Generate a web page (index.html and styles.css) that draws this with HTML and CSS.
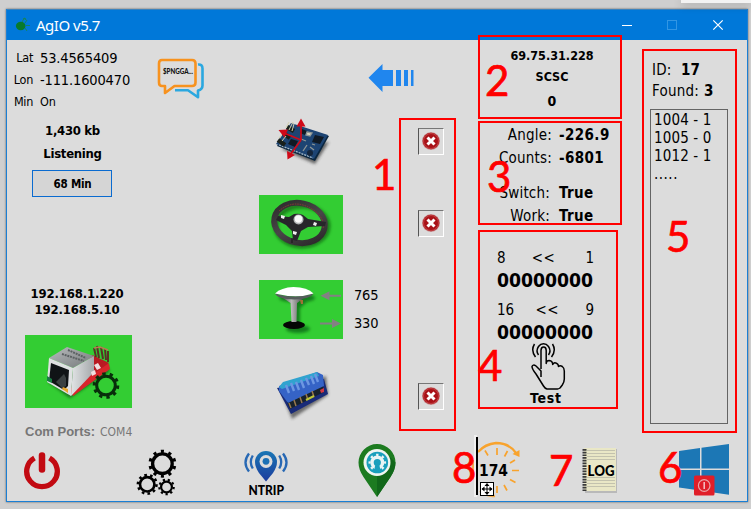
FILE: index.html
```html
<!DOCTYPE html>
<html lang="en">
<head>
<meta charset="utf-8">
<title>AgIO v5.7</title>
<link rel="stylesheet" href="styles.css">
</head>
<body>
<div class="popup-edge"></div>
<div class="window">
  <header class="titlebar">
    <svg class="app-icon" width="16" height="18" viewBox="15 16 16 18"><ellipse cx="20.700" cy="26" rx="4.800" ry="4.200" fill="#087a2b"/><g fill="none" stroke="#16845c" stroke-width="1"><path d="M22 22l2-3.500 2 1M25 23l2-3M26 25.500h4M25 28l2 3M23 19l2-1 1 2"/></g></svg>
    <h1 class="title">AgIO v5.7</h1>
    <svg class="controls" width="110" height="14" viewBox="620 17 110 14" fill="none"><path d="M622 24.500h10" stroke="#fff"/><rect x="667.500" y="19.500" width="9" height="9" stroke="#3296e4"/><path d="M713.300 19.300l9.400 9.400m0-9.400l-9.400 9.400" stroke="#fff" stroke-width="1.200"/></svg>
  </header>

  <main class="main">
    <section class="col-info">
      <div class="gps"><span class="gps-key">Lat</span><span class="gps-num">53.4565409</span></div>
      <div class="gps"><span class="gps-key">Lon</span><span class="gps-num">-111.1600470</span></div>
      <div class="gps"><span class="gps-key">Min</span><span class="gps-small">On</span></div>
      <div class="stat first">1,430 kb</div>
      <div class="stat">Listening</div>
      <button class="btn-min">68 Min</button>
      <div class="ips"><div>192.168.1.220</div><div>192.168.5.10</div></div>
      <div class="ethernet">
        <svg width="107" height="73" viewBox="25 335 107 73">
          <defs><filter id="soft" x="-30%" y="-30%" width="160%" height="160%"><feGaussianBlur stdDeviation="1.6"/></filter>
          <linearGradient id="metal" x1="0" y1="0" x2="1" y2="1"><stop offset="0" stop-color="#b9bcbe"/><stop offset="1" stop-color="#74787a"/></linearGradient>
          <linearGradient id="side" x1="0" y1="0" x2="1" y2="0"><stop offset="0" stop-color="#e2e4e6"/><stop offset="1" stop-color="#a4a8aa"/></linearGradient></defs>
          <path d="M48 382l22 16 40-27-8-10z" fill="#073b0a" opacity=".65" filter="url(#soft)"/>
          <path d="M70 390l3 6 37-27-1-5-17-9z" fill="#d8252b"/>
          <path d="M92 355l17 8-24 17z" fill="#b91922"/>
          <path d="M94 348l2 9m1-11l2 12m2-11l2 12m2-10l1 11m2-9v11" stroke="#593024" stroke-width="2"/>
          <path d="M94 348l6-1 8 3" fill="none" stroke="#b87950" stroke-width="1.500"/>
          <path d="M49 358l18-11 27 9-21 12z" fill="url(#metal)"/>
          <path d="M73 368l21-12v16l-23 24z" fill="url(#side)"/>
          <path d="M49 358l24 10-2 28-24-14z" fill="#dfe1e2"/>
          <path d="M51 363l18 7-1 16-4 4-15-9z" fill="#101416"/>
          <path d="M56 382l8-8 2 4v8l-4 2z" fill="#3b4142"/>
          <path d="M47 376l5 3v4l-5-2z" fill="#197d42"/><path d="M63 387l5 2v4l-6-4z" fill="#e9a72e"/>
          <path d="M68 350l18 8M62 354l22 7" stroke="#5c6163" stroke-width="2" stroke-dasharray="2 .8"/>
          <path d="M94 365l4-2 3 5-4 2zm-3 7l4-2 1 4-4 2z" fill="#f0dfe0"/>
          <circle cx="106" cy="385.500" r="9.300" fill="none" stroke="#082e0b" stroke-width="3"/>
          <circle cx="106" cy="385.500" r="11.700" fill="none" stroke="#082e0b" stroke-width="3.200" pathLength="200" stroke-dasharray="9 11"/>
        </svg>
      </div>
      <div class="com"><b>Com Ports:</b><span>COM4</span></div>
    </section>

    <section class="col-chat">
      <svg width="50" height="44" viewBox="156 57 50 44" fill="none" stroke-width="2.600" stroke-linejoin="round"><path d="M198 64.500q4.500-.5 4.500 4v17q0 4-4.500 5v6.700l-10-7h-13" stroke="#2ba8e0"/><path d="M162 60h30q3.500 0 3.500 3.500v19q0 3.500-3.500 3.500h-17.500l-9.500 7v-7h-3q-3 0-3-3.500v-19q0-3.500 3-3.500z" stroke="#f7921e"/><text x="163" y="74" font-family="Lato, sans-serif" font-size="7" font-weight="900" fill="#111" textLength="30" lengthAdjust="spacingAndGlyphs">$PNGGA...</text></svg>
    </section>

    <section class="col-modules">
      <div class="arrow-row"><svg width="46" height="29" viewBox="368 63 46 29" fill="#2086ee"><path d="M368.500 77.800L382.500 64v6H393v16h-10.500v6z"/><path d="M396 70h5v16h-5zM404 70h4v16h-4zM411 70h2.500v16H411z"/></svg></div>

      <div class="module row-imu">
        <div class="pic plain"><svg width="84" height="60" viewBox="259 109 84 60">
          <path d="M281 147l34 15 14-22z" fill="#333" opacity=".7" filter="url(#soft)"/>
          <path d="M277 144l14-22 38 12-14 25z" fill="#0b263f"/><path d="M276 142l15-21 37 12-14 24z" fill="#1d4473"/>
          <path d="M279 143l34 13" stroke="#a5b9c6" stroke-width="1.300" stroke-dasharray="2 1"/>
          <path d="M278 138l7 5m-2-12l7 5m-3-11l7 4" stroke="#18201c" stroke-width="4.500"/>
          <path d="M286 126l3-6m0 8l4-8m-1 9l2-7M279 136l4-5m-1 8l4-5" stroke="#d3cfae" stroke-width="1"/>
          <path d="M315 133l9 2-4 7-8-2zm-24 4l7 2-3 6-7-3zm11-10l5 2-2 4-5-2z" fill="#101a25"/>
          <path d="M307 130l5 1-2 3-4-1zM303 149l4-6m3 2l4 3M301 137l5 2M312 142l3 1" stroke="#8f9796" stroke-width="1.300" fill="#ddd9c2"/>
          <circle cx="310" cy="151" r="3" fill="#14253b"/>
          <g stroke="#d00918" stroke-width="1.700" fill="none"><path d="M301 138v-17M301 138l-17-7M301 138l-11 15"/></g>
          <path d="M301 116.500l4.500 8h-9zM278.500 128l9.500-.5-3.500 8zM287 149l8 4-7.500 4.500z" fill="#d00918"/>
        </svg></div>
        <div class="values"></div><div class="status"><svg width="18" height="18" viewBox="0 0 18 18"><circle cx="9" cy="9" r="9" fill="#c98f90"/><circle cx="9" cy="9" r="8.300" fill="#a91218"/><circle cx="9" cy="9" r="7.500" fill="none" stroke="#d25a5c" stroke-width=".6"/><path d="M5.500 5.500l7 7m0-7l-7 7" stroke="#fff" stroke-width="3"/></svg></div>
      </div>

      <div class="module row-steer">
        <div class="pic green"><svg width="84" height="59" viewBox="259 195 84 59">
          <defs><linearGradient id="rim" x1="0" y1="0" x2="1" y2="1"><stop offset="0" stop-color="#2b282a"/><stop offset=".5" stop-color="#494648"/><stop offset="1" stop-color="#272426"/></linearGradient></defs>
          <ellipse cx="302" cy="226" rx="26" ry="20" fill="none" stroke="#084b0b" stroke-width="5" opacity=".6" filter="url(#soft)"/>
          <ellipse cx="299.500" cy="223" rx="25.500" ry="19.800" transform="rotate(12 299.500 223)" fill="none" stroke="url(#rim)" stroke-width="6"/>
          <path d="M279 211q16-14 36 0 10 8 8 18" fill="none" stroke="#8b3a32" stroke-width="1" stroke-dasharray="1.500 1"/>
          <path d="M278 216l11 1 5-3q5-1 9 1l5 4 18 3-1 4-17 1-7 4-4 10-4-1-1-9-6-6-10-5z" fill="#27262a"/>
          <circle cx="298.500" cy="219.500" r="5" fill="#b4b7b8"/><circle cx="298.500" cy="219" r="3.700" fill="#fafafa"/>
          <path d="M281 215l4 1-1 3-3-1zM314 222l3 1-1 3-3-1zM293 231l4 1-1 3-3-1z" fill="#f0f0f0"/><path d="M292 238v5" stroke="#171517"/>
        </svg></div>
        <div class="values"></div><div class="status"><svg width="18" height="18" viewBox="0 0 18 18"><circle cx="9" cy="9" r="9" fill="#c98f90"/><circle cx="9" cy="9" r="8.300" fill="#a91218"/><circle cx="9" cy="9" r="7.500" fill="none" stroke="#d25a5c" stroke-width=".6"/><path d="M5.500 5.500l7 7m0-7l-7 7" stroke="#fff" stroke-width="3"/></svg></div>
      </div>

      <div class="module row-gps">
        <div class="pic green"><svg width="84" height="59" viewBox="259 280 84 59">
          <defs><linearGradient id="pole" x1="0" x2="1"><stop offset="0" stop-color="#555"/><stop offset=".4" stop-color="#bbb"/><stop offset="1" stop-color="#444"/></linearGradient></defs>
          <g fill="#064b0b" opacity=".6" filter="url(#soft)"><ellipse cx="297" cy="298" rx="18" ry="4.500"/><path d="M293 302h14l-7 6v17h-5v-17z"/><ellipse cx="298" cy="329" rx="12" ry="4"/></g>
          <ellipse cx="294" cy="325" rx="11" ry="4" fill="#050605"/>
          <path d="M283 298h21l-7 5-.500 19h-5l-1-19z" fill="url(#pole)"/>
          <path d="M275 293.500q18 6 38.500 0-3 5.500-19 6-17-.5-19.500-6z" fill="#555d5b"/>
          <path d="M275 293.500q6-6 18.500-6.500 14 .3 20 6.500-17 5.500-38.500 0z" fill="#fff"/><path d="M300 300h3v4h-2z" fill="#a27037"/>
          <path d="M328 295.700h13M320 323.500h14" stroke="#848084" stroke-width="2"/><path d="M320.500 295.700l9-4.500v9zM341 323.500l-9-4.500v9z" fill="#848084"/>
        </svg></div>
        <div class="values"><span>765</span><span>330</span></div><div class="no-status"></div>
      </div>

      <div class="module row-machine">
        <div class="pic plain"><svg width="84" height="66" viewBox="259 364 84 66">
          <path d="M281 394l44-18 2 19-36 24z" transform="translate(1 1)" fill="#333" opacity=".65" filter="url(#soft)"/>
          <path d="M277 389l14 26 37-20-4-15z" fill="#192b78"/><path d="M287 403l36-16 1 6-34 17z" fill="#18222c"/>
          <path d="M279 387l38-14 6 3 1 11-36 17-9-12z" fill="#3563c6"/><path d="M279 388l4-5 34-10 2 4-37 13z" fill="#31a3cf"/>
          <path d="M286 386l3 8m2-10l3 8m2-9l3 8m2-10l3 8m2-10l3 7m2-9l3 8m1-10l3 8" stroke="#6d97e2" stroke-width="2.400"/>
          <path d="M289 404l2 5m3-8l2 6m4-9l2 6m4-9l2 6m4-9l2 6" stroke="#987850" stroke-width="1.500"/><path d="M306 401l8-4" stroke="#bdc638" stroke-width="2"/><path d="M320 391l4-2v4l-3 1z" fill="#d33845"/>
        </svg></div>
        <div class="values"></div><div class="status"><svg width="18" height="18" viewBox="0 0 18 18"><circle cx="9" cy="9" r="9" fill="#c98f90"/><circle cx="9" cy="9" r="8.300" fill="#a91218"/><circle cx="9" cy="9" r="7.500" fill="none" stroke="#d25a5c" stroke-width=".6"/><path d="M5.500 5.500l7 7m0-7l-7 7" stroke="#fff" stroke-width="3"/></svg></div>
      </div>
    </section>

    <section class="col-data">
      <div class="caster"><div>69.75.31.228</div><div class="mount">SCSC</div><div class="age">0</div></div>
      <dl class="steer"><dt>Angle:</dt><dd>-226.9</dd><dt>Counts:</dt><dd>-6801</dd></dl>
      <dl class="steer switches"><dt>Switch:</dt><dd>True</dd><dt>Work:</dt><dd>True</dd></dl>
      <div class="bits">
        <div class="bit-head"><span>8</span><span class="dir">&lt;&lt;</span><span>1</span></div><div class="bit-val">00000000</div>
        <div class="bit-head second"><span>16</span><span class="dir">&lt;&lt;</span><span>9</span></div><div class="bit-val">00000000</div>
      </div>
      <div class="test"><svg width="36" height="49" viewBox="530 341 36 49" fill="none" stroke="#000" stroke-width="1.500" stroke-linejoin="round"><path d="M541 369v-18.500q0-3.500 2.600-3.500t2.600 3.500v13q0-3 3-3 3.500.5 3.500 4 1-2.500 3.800-1.300 2 .8 2 3.300 1.500-1.500 3.800 0 2 1.500 2 4.500v8q0 3-2 6l-2.300 3q-1.500 1-2.500 1H547q-2-.5-3.500-3l-7.500-12q-4-5-4-7.500 1-2.500 4-.5l5 5v6"/><path d="M538.500 355q-3-4 0-8.500 2-2.800 5-2.800t5 2.800q3 4.500 0 8.500M535.500 357q-5-6.500-1-13M551.500 357q5-6.500 1-13"/></svg><span>Test</span></div>
    </section>

    <section class="col-list">
      <div class="pair"><span class="id-key">ID:</span><b>17</b></div>
      <div class="pair"><span class="found-key">Found:</span><b>3</b></div>
      <div class="listbox"><div>1004 - 1</div><div>1005 - 0</div><div>1012 - 1</div><div class="more">.....</div></div>
    </section>
  </main>

  <footer class="toolbar">
    <svg width="38" height="61" viewBox="23 440 38 61" fill="none"><path d="M34.500 458a15.300 15.300 0 1 0 15 0" stroke="#c20a12" stroke-width="5.300"/><path d="M42 455.500v14" stroke="#c20a12" stroke-width="6.500" stroke-linecap="round"/></svg>
    <svg width="42" height="61" viewBox="136 440 42 61" fill="none" stroke="#000"><circle cx="162.400" cy="463.700" r="9.800" stroke-width="3.300"/><circle cx="162.400" cy="463.700" r="12.400" stroke-width="3.200" pathLength="200" stroke-dasharray="8 12" stroke-dashoffset="-46"/><circle cx="147.200" cy="484.300" r="7.200" stroke-width="2.600"/><circle cx="147.200" cy="484.300" r="9.300" stroke-width="2.600" pathLength="200" stroke-dasharray="9 11"/><circle cx="166.500" cy="487" r="5.400" stroke-width="2.200"/><circle cx="166.500" cy="487" r="7.200" stroke-width="2.200" pathLength="180" stroke-dasharray="9 11"/></svg>
    <svg width="48" height="61" viewBox="242 440 48 61"><defs><linearGradient id="blue" x1="0" y1="0" x2="0" y2="1"><stop offset="0" stop-color="#1976b5"/><stop offset="1" stop-color="#1c3c9d"/></linearGradient></defs><path d="M266 451a11 11 0 0 1 11 11q0 5-4 11l-7 8.500-7-8.500q-4-6-4-11a11 11 0 0 1 11-11z" fill="url(#blue)"/><circle cx="266" cy="461.500" r="6.500" fill="#dcdcdc"/><circle cx="266" cy="461.300" r="3.400" fill="#1b70b5"/><path d="M252.800 455.500q-4 6.500 0 13M249 453.500q-7 9 0 18M279.200 455.500q4 6.500 0 13M283 453.500q7 9 0 18" fill="none" stroke="#2768b4" stroke-width="2.300"/><text x="248.500" y="494.800" font-family="Lato, sans-serif" font-weight="900" font-size="12.500" textLength="35.500" lengthAdjust="spacingAndGlyphs">NTRIP</text></svg>
    <svg width="40" height="61" viewBox="357 440 40 61"><path d="M377 444a18.500 18.500 0 0 1 18.500 18.500q0 7-5 14.500L377 497l-13.500-20q-5-7.500-5-14.500A18.500 18.500 0 0 1 377 444z" fill="#1c7b20"/><path d="M377 476v21l13.500-20q5-7.500 5-14.500L389 456z" fill="#11671a"/><circle cx="377" cy="462.500" r="13.500" fill="#eff5f1"/><circle cx="377.300" cy="462.500" r="10.800" fill="#199fbc"/><circle cx="377.300" cy="462.500" r="5.300" fill="none" stroke="#e8f4f4" stroke-width="3.400"/><circle cx="377.300" cy="462.500" r="7.700" fill="none" stroke="#e8f4f4" stroke-width="2.200" pathLength="160" stroke-dasharray="8 12" stroke-dashoffset="4"/><path d="M375.500 464h3.600l2 9h-7.600z" fill="#199fbc"/></svg>
    <svg class="timer" width="48" height="61" viewBox="474 440 48 61"><g fill="none" stroke="#f8a32d" stroke-width="2.300"><path d="M478 452q7-8 18-9 13 0 20 10"/><path d="M474 460q-3 10 1 20M480 491q7 6 15 5" opacity=".8"/><path stroke-width="1.700" d="M497 448v7M507.500 451l-3 5.500M515 460l-5 3M512 470.500h7M510 479.500l5.500 3M504 485l3 5.500M497 486v7M485 450.500l3 5"/></g><path d="M519.500 450v7l-7-3z" fill="#f8a32d"/><path d="M475.500 435v62" stroke="#efefef" stroke-width="3"/><path d="M477 437v58" stroke="#000" stroke-width="2"/><text x="479" y="476" font-family="DejaVu Sans Condensed, DejaVu Sans, sans-serif" font-weight="bold" font-size="15" textLength="29" lengthAdjust="spacingAndGlyphs">174</text><rect x="480.500" y="482.500" width="13" height="13" fill="#fff" stroke="#000"/><path d="M487 484v10M482 489h10" stroke="#000"/><path d="M487 483l2.500 3h-5zm0 12l2.500-3h-5zM481.500 489l3-2.500v5zm11 0l-3-2.500v5z"/></svg>
    <svg width="38" height="61" viewBox="581 440 38 61"><path d="M585 449h32v44h-32z" fill="#aaa" opacity=".7"/><path d="M584 448h32v43h-32z" fill="#e9e7c6"/><path d="M587 450.500h28m-28 3h28m-28 3h28m-28 3h28m-28 18h28m-28 3h28m-28 3h28m-28 3h28" stroke="#b9b9a8" stroke-width=".8"/><path d="M584.500 449v42" stroke="#393939" stroke-width="4" stroke-dasharray="1.700 1"/><text x="587.500" y="475.500" font-family="Lato, sans-serif" font-weight="900" font-size="15" textLength="27" lengthAdjust="spacingAndGlyphs">LOG</text></svg>
    <svg width="52" height="61" viewBox="678 440 52 61"><path d="M679 451l21-3v20.500h-21zM701.500 447.700L729 444v24.500h-27.500zM679 470h21v20.500l-21-3zM701.500 470H729v24.700l-27.500-4z" fill="#1c77b5"/><rect x="694" y="475.500" width="20.500" height="20" rx="1.500" fill="#e01e28"/><circle cx="704.200" cy="485.500" r="5.800" fill="none" stroke="#eaa4a7" stroke-width="1.200"/><path d="M704.200 482v7" stroke="#f4c6c8" stroke-width="1.500"/></svg>
  </footer>
</div>

<svg class="notes" width="751" height="509" viewBox="0 0 751 509">
  <g fill="none" stroke="#f00" stroke-width="2"><rect x="400" y="119" width="55" height="311"/><rect x="479" y="36" width="142" height="82"/><rect x="479" y="122" width="142" height="102"/><rect x="479" y="231" width="138" height="177"/><rect x="643" y="50" width="93" height="382"/></g>
  <g class="note-num"><text x="372" y="190">1</text><text x="485" y="96">2</text><text x="487" y="192">3</text><text x="478" y="381">4</text><text x="666" y="252">5</text><text x="658" y="483">6</text><text x="549" y="486">7</text><text x="452" y="483">8</text></g>
</svg>
</body>
</html>
```
FILE: styles.css
```css
* { box-sizing: border-box; }
body { margin: 0; width: 751px; height: 509px; overflow: hidden; padding: 9px 3px 0 6px; background: #cfcfcf; font-family: "DejaVu Sans Condensed", "DejaVu Sans", sans-serif; font-stretch: condensed; color: #000; white-space: nowrap; }
svg { display: block; flex: none; }
.popup-edge { position: absolute; right: 0; top: 0; width: 70px; height: 3px; background: #f3f3f3; box-shadow: 0 2px 8px rgba(0,0,0,.3); }

.window { width: 742px; height: 493px; border: 1px solid #1b7fd4; border-top: 0; background: #dcdcdc; box-shadow: 0 0 2px rgba(0,0,0,.55); }
.titlebar { height: 31px; background: #0078d9; border-top: 1px solid #3c83bd; display: flex; align-items: center; padding: 0 17px 0 8px; }
.title { margin: 0 auto 0 5px; color: #fff; font: 15px "Noto Sans", sans-serif; line-height: 28px; letter-spacing: -.5px; }

.main { display: grid; grid-template-columns: 143px 100px 212px 180px 105px; height: 400px; }

.col-info { padding-top: 7px; }
.gps { display: flex; height: 22px; line-height: 22px; }
.gps-key { width: 26px; margin-right: 7px; text-align: right; font-size: 12.500px; letter-spacing: -.3px; }
.gps-num { font-size: 14.500px; letter-spacing: -.15px; }
.gps-small { font-size: 12.500px; letter-spacing: -.2px; }
.stat { width: 131px; text-align: center; font-size: 13px; font-weight: bold; line-height: 23px; letter-spacing: -.3px; }
.stat.first { margin-top: 6px; }
.btn-min { display: block; width: 80px; height: 27px; margin: 5px 0 0 25px; padding: 0 0 0 1px; border: 1px solid #0a6bd0; background: #d5d5d5; font: bold 11.500px "DejaVu Sans Condensed", "DejaVu Sans", sans-serif; font-stretch: condensed; letter-spacing: -.2px; }
.ips { width: 140px; margin-top: 89px; text-align: center; font-size: 13px; font-weight: bold; line-height: 16px; letter-spacing: -.15px; }
.ethernet { width: 107px; height: 73px; margin: 17px 0 0 18px; background: #33cd33; }
.com { display: flex; gap: 5px; margin: 14px 0 0 18px; line-height: 20px; font-size: 12px; color: #777; }
.com b { font-family: "Liberation Sans", sans-serif; font-size: 13px; }

.col-chat { padding: 17px 0 0 6px; }

.col-modules { padding-left: 9px; }
.arrow-row { height: 58px; padding: 23px 0 0 109px; }
.module { display: grid; grid-template-columns: 84px 75px 26px; align-items: center; }
.row-imu { height: 86px; }
.row-steer { height: 81px; }
.row-gps { height: 89px; }
.row-machine { height: 84px; }
.green { background: #33cd33; }
.values { display: grid; padding: 0 0 2px 11px; font-size: 14.500px; line-height: 28px; letter-spacing: -.2px; }
.status { display: grid; place-items: center; width: 26px; height: 27px; border: 1px solid #fff; border-top-color: #777; border-left-color: #555; }
.row-steer .status { margin-bottom: 3px; }

.col-data { padding-top: 6px; }
.caster { text-align: center; font-size: 12.500px; font-weight: bold; line-height: 20px; }
.mount { margin-top: 1px; }
.age { margin-top: 2px; font-size: 14px; line-height: 24px; }
.steer { display: grid; grid-template-columns: 90px 1fr; column-gap: 7px; margin: 11px 0 0; font-size: 15px; line-height: 23px; letter-spacing: .2px; }
.steer dt { text-align: right; }
.steer dd { margin: 0; font-weight: bold; letter-spacing: .4px; }
.switches { margin-top: 12px; grid-template-columns: 88px 1fr; column-gap: 9px; }
.bits { width: 97px; margin: 19px 0 0 35px; }
.bit-head { display: flex; justify-content: space-between; line-height: 22px; font-size: 15px; }
.dir { margin: 0 4px 0 0; letter-spacing: .4px; }
.bit-head.second { margin-top: 6px; }
.bit-head.second .dir { margin-right: 5px; }
.bit-val { font-size: 19.200px; font-weight: bold; line-height: 24px; }
.test { display: grid; justify-items: start; margin: -4px 0 0 68px; font-size: 14px; font-weight: bold; line-height: 18px; letter-spacing: .7px; }
.test span { margin-top: -1px; }

.col-list { padding: 20px 0 0 8px; font-size: 15px; letter-spacing: .2px; }
.pair { display: flex; line-height: 21px; padding-left: 2px; }
.id-key { width: 29px; }
.found-key { width: 52px; }
.listbox { width: 78px; height: 315px; margin-top: 7px; padding: 1px 0 0 3px; border: 1px solid #646464; line-height: 18px; letter-spacing: .15px; }
.more { letter-spacing: .5px; }

.toolbar { display: flex; height: 61px; padding-left: 16px; }
.toolbar svg:nth-child(2) { margin-left: 75px; }
.toolbar svg:nth-child(3) { margin-left: 64px; }
.toolbar svg:nth-child(4) { margin-left: 67px; }
.toolbar svg:nth-child(5) { margin-left: 77px; overflow: visible; }
.toolbar svg:nth-child(6) { margin-left: 59px; }
.toolbar svg:nth-child(7) { margin-left: 59px; }

/* Numbered callouts drawn over the window */
.notes { position: absolute; left: 0; top: 0; pointer-events: none; }
.note-num { fill: #f00; stroke: #f00; stroke-width: .7px; font: 42px Lato, sans-serif; }
```
